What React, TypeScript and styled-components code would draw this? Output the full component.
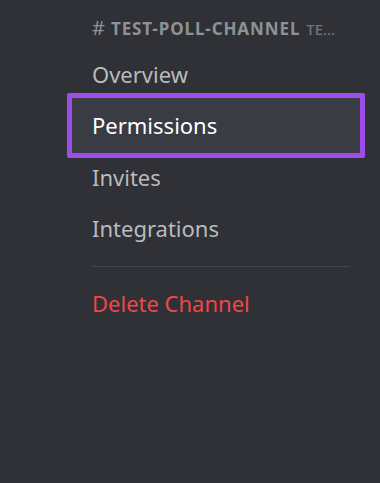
import React from "react";
import styled, { createGlobalStyle } from "styled-components";

const GlobalStyle = createGlobalStyle`
  html, body {
    margin: 0;
    padding: 0;
    background: #2f3136;
  }
  body {
    font-family: "Noto Sans", "Open Sans", sans-serif;
  }
`;

const items = [
  { label: "Overview" },
  { label: "Permissions", selected: true },
  { label: "Invites" },
  { label: "Integrations" },
];

export default function App() {
  return (
    <>
      <GlobalStyle />
      <Page>
        <Sidebar>
          <Header>
            <Hash>#</Hash>
            <ChannelName>TEST-POLL-CHANNEL</ChannelName>
            <Category>TEXT CHANNELS</Category>
          </Header>
          <ItemList>
            {items.map((item) => (
              <Item key={item.label} $selected={item.selected}>
                {item.label}
              </Item>
            ))}
          </ItemList>
          <Divider />
          <Item $danger>Delete Channel</Item>
        </Sidebar>
      </Page>
    </>
  );
}

const Page = styled.div`
  min-height: 100vh;
  background: #2f3136;
`;

const Sidebar = styled.nav`
  display: flex;
  flex-direction: column;
  padding: 16px 30px 0 82px;
`;

const Header = styled.div`
  display: flex;
  align-items: baseline;
  gap: 6px;
  line-height: 24px;
  padding: 0 8px 0 10px;
  margin-bottom: 10px;
  color: #8e9297;
  white-space: nowrap;
`;

const Hash = styled.span`
  font-size: 20px;
  font-weight: 400;
  color: #8e9297;
`;

const ChannelName = styled.span`
  font-size: 17px;
  font-weight: 700;
  letter-spacing: 0.9px;
  flex-shrink: 0;
`;

const Category = styled.span`
  font-size: 15px;
  font-weight: 500;
  color: #72767d;
  overflow: hidden;
  text-overflow: ellipsis;
  min-width: 0;
`;

const ItemList = styled.div`
  display: flex;
  flex-direction: column;
  gap: 5.33px;
`;

const Item = styled.div<{ $selected?: boolean; $danger?: boolean }>`
  position: relative;
  z-index: 0;
  display: flex;
  align-items: center;
  height: 46px;
  padding: 0 10px;
  font-size: 22px;
  color: ${(p) => (p.$danger ? "#f04747" : p.$selected ? "#ffffff" : "#b9bbbe")};

  ${(p) =>
    p.$selected &&
    `
    &::after {
      content: "";
      position: absolute;
      z-index: -1;
      top: -9px;
      bottom: -10px;
      left: -15px;
      right: -15px;
      background: #393c43;
      border: 5.5px solid #9c4dea;
      border-radius: 2px;
    }
  `}
`;

const Divider = styled.div`
  height: 1px;
  margin: 15px 0 13px 10px;
  background: #42454a;
`;
